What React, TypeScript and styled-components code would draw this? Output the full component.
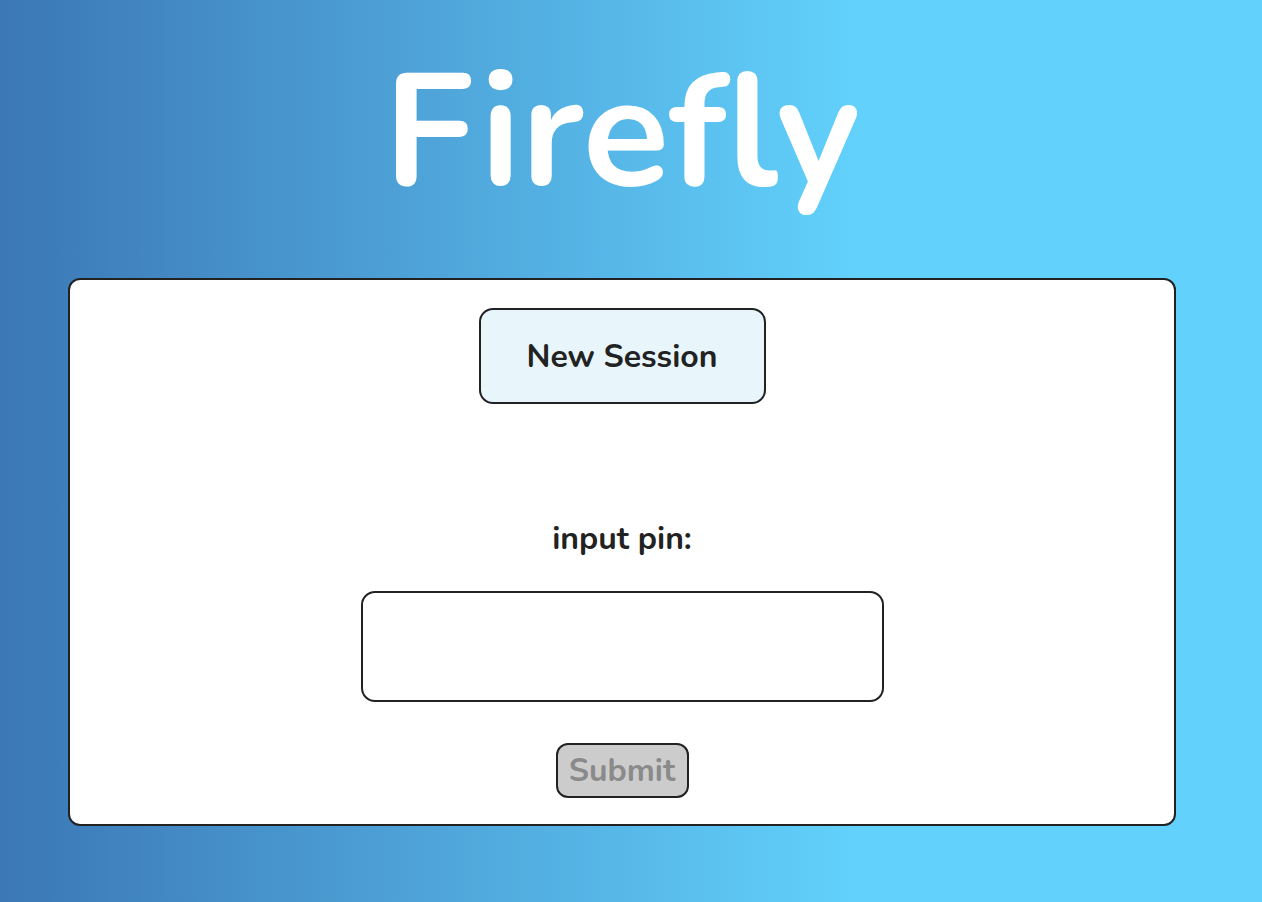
import React from "react";
import styled, { createGlobalStyle } from "styled-components";

const Global = createGlobalStyle`
  html, body { margin: 0; padding: 0; }
  body {
    min-height: 902px;
    background: linear-gradient(90deg, #3b77b5 0%, #62d1fc 68%, #62d1fc 100%);
    font-family: "Nunito", "Lato", "Noto Sans", sans-serif;
  }
`;

const Page = styled.main`
  width: 1244px;
  display: flex;
  flex-direction: column;
  align-items: center;
`;

const Title = styled.h1`
  margin: 52px 0 0;
  height: 226px;
  font-size: 160px;
  line-height: 1;
  font-weight: 700;
  color: #fff;
`;

const Card = styled.section`
  box-sizing: border-box;
  width: 1108px;
  height: 548px;
  background: #fff;
  border: 2px solid #222;
  border-radius: 12px;
  display: flex;
  flex-direction: column;
  align-items: center;
  padding-top: 28px;
`;

const SessionButton = styled.button`
  box-sizing: border-box;
  width: 287px;
  height: 96px;
  background: #e8f6fc;
  border: 2px solid #222;
  border-radius: 14px;
  font-family: inherit;
  font-size: 32px;
  font-weight: 700;
  color: #222;
`;

const Label = styled.label`
  margin-top: 115px;
  font-size: 32px;
  font-weight: 700;
  color: #222;
  line-height: 40px;
`;

const PinInput = styled.input`
  box-sizing: border-box;
  margin-top: 32px;
  width: 523px;
  height: 111px;
  border: 2px solid #222;
  border-radius: 14px;
  background: #fff;
  font-family: inherit;
  font-size: 32px;
  outline: none;
`;

const SubmitButton = styled.button`
  box-sizing: border-box;
  margin-top: 41px;
  width: 133px;
  height: 55px;
  background: #cccccc;
  border: 2px solid #222;
  border-radius: 12px;
  font-family: inherit;
  font-size: 32px;
  font-weight: 700;
  color: #8a8a8a;
  padding: 0;
`;

export default function App() {
  return (
    <>
      <Global />
      <Page>
        <Title>Firefly</Title>
        <Card>
          <SessionButton>New Session</SessionButton>
          <Label htmlFor="pin">input pin:</Label>
          <PinInput id="pin" type="text" />
          <SubmitButton disabled>Submit</SubmitButton>
        </Card>
      </Page>
    </>
  );
}
